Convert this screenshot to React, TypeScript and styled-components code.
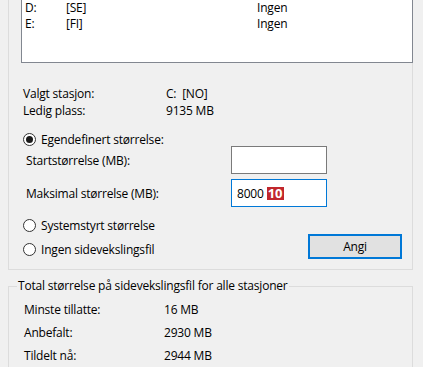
import styled, { createGlobalStyle } from 'styled-components';

const GlobalStyle = createGlobalStyle`
  html, body {
    margin: 0;
    padding: 0;
    background: #f0f0f0;
    overflow: hidden;
  }
  body {
    font-family: "Open Sans", "Noto Sans", Arial, sans-serif;
    font-size: 12px;
    letter-spacing: -0.2px;
    color: #000;
  }
`;

const Page = styled.div`
  width: 423px;
  height: 367px;
  overflow: hidden;
  padding: 0 0 0 8px;
  box-sizing: border-box;
  background: #f0f0f0;
`;

const Group = styled.div`
  width: 405px;
  box-sizing: border-box;
  margin-top: -1px;
  border: 1px solid #dcdcdc;
  padding-bottom: 10px;
`;

const ListBox = styled.div`
  width: 392px;
  height: 63px;
  box-sizing: border-box;
  margin-left: 12px;
  background: #fff;
  border: 1px solid #828790;
  border-top: none;
  padding: 0 3px;
  display: flex;
  flex-direction: column;
`;

const DriveRow = styled.div`
  display: grid;
  grid-template-columns: 41px 191px auto;
  line-height: 16px;
  height: 16px;
`;

const InfoGrid = styled.div`
  display: grid;
  grid-template-columns: 143px auto;
  row-gap: 1px;
  line-height: 16px;
  margin-top: 23px;
  padding-left: 14px;
`;

const Radio = styled.div<{ $top?: number }>`
  display: flex;
  align-items: center;
  gap: 5px;
  height: 14px;
  margin-top: ${(p) => p.$top ?? 0}px;
  padding-left: 14px;
  white-space: nowrap;
`;

const Dot = styled.span<{ $on?: boolean }>`
  width: 13px;
  height: 13px;
  box-sizing: border-box;
  border-radius: 50%;
  border: 1px solid #333;
  background: #fff;
  display: flex;
  align-items: center;
  justify-content: center;
  flex-shrink: 0;
  &::after {
    content: '';
    display: ${(p) => (p.$on ? 'block' : 'none')};
    width: 7px;
    height: 7px;
    border-radius: 50%;
    background: #1a1a1a;
  }
`;

const FieldRow = styled.div<{ $top?: number }>`
  display: grid;
  grid-template-columns: 205px 96px;
  align-items: center;
  margin-top: ${(p) => p.$top ?? 0}px;
  padding-left: 17px;
`;

const Input = styled.div<{ $focus?: boolean }>`
  height: 28px;
  box-sizing: border-box;
  background: #fff;
  border: 1px solid ${(p) => (p.$focus ? '#0078d7' : '#7a7a7a')};
  padding-left: 5px;
  display: flex;
  align-items: center;
  gap: 3px;
`;

const Marker = styled.span`
  background: #c1272d;
  color: #fff;
  font-weight: 700;
  font-size: 13px;
  line-height: 13px;
  padding: 0 1px;
  letter-spacing: 0;
`;

const BottomRow = styled.div`
  display: flex;
  justify-content: space-between;
  align-items: flex-start;
  margin-top: 2px;
  padding-right: 10px;
`;

const Button = styled.div`
  width: 94px;
  height: 25px;
  box-sizing: border-box;
  background: #e1e1e1;
  border: 2px solid #0078d7;
  display: flex;
  align-items: center;
  justify-content: center;
`;

const Totals = styled.fieldset`
  width: 405px;
  box-sizing: border-box;
  margin: 8px 0 0;
  padding: 0 0 20px 8px;
  border: 1px solid #dcdcdc;
  min-height: 120px;
  legend {
    padding: 0 1px;
    line-height: 16px;
  }
`;

const TotalsGrid = styled.div`
  display: grid;
  grid-template-columns: 140px auto;
  row-gap: 7px;
  line-height: 16px;
  padding: 8px 0 0 7px;
`;

const drives = [
  ['D:', '[SE]', 'Ingen'],
  ['E:', '[FI]', 'Ingen'],
];

export default function App() {
  return (
    <>
      <GlobalStyle />
      <Page>
        <Group>
          <ListBox>
            {drives.map(([d, l, s]) => (
              <DriveRow key={d}>
                <span>{d}</span>
                <span>{l}</span>
                <span>{s}</span>
              </DriveRow>
            ))}
          </ListBox>
          <InfoGrid>
            <span>Valgt stasjon:</span>
            <span>C:&nbsp;&nbsp;[NO]</span>
            <span>Ledig plass:</span>
            <span>9135 MB</span>
          </InfoGrid>
          <Radio $top={13}>
            <Dot $on />
            Egendefinert størrelse:
          </Radio>
          <FieldRow>
            <span>Startstørrelse (MB):</span>
            <Input />
          </FieldRow>
          <FieldRow $top={5}>
            <span>Maksimal størrelse (MB):</span>
            <Input $focus>
              8000 <Marker>10</Marker>
            </Input>
          </FieldRow>
          <Radio $top={11}>
            <Dot />
            Systemstyrt størrelse
          </Radio>
          <BottomRow>
            <Radio $top={8}>
              <Dot />
              Ingen sidevekslingsfil
            </Radio>
            <Button>Angi</Button>
          </BottomRow>
        </Group>
        <Totals>
          <legend>Total størrelse på sidevekslingsfil for alle stasjoner</legend>
          <TotalsGrid>
            <span>Minste tillatte:</span>
            <span>16 MB</span>
            <span>Anbefalt:</span>
            <span>2930 MB</span>
            <span>Tildelt nå:</span>
            <span>2944 MB</span>
          </TotalsGrid>
        </Totals>
      </Page>
    </>
  );
}
